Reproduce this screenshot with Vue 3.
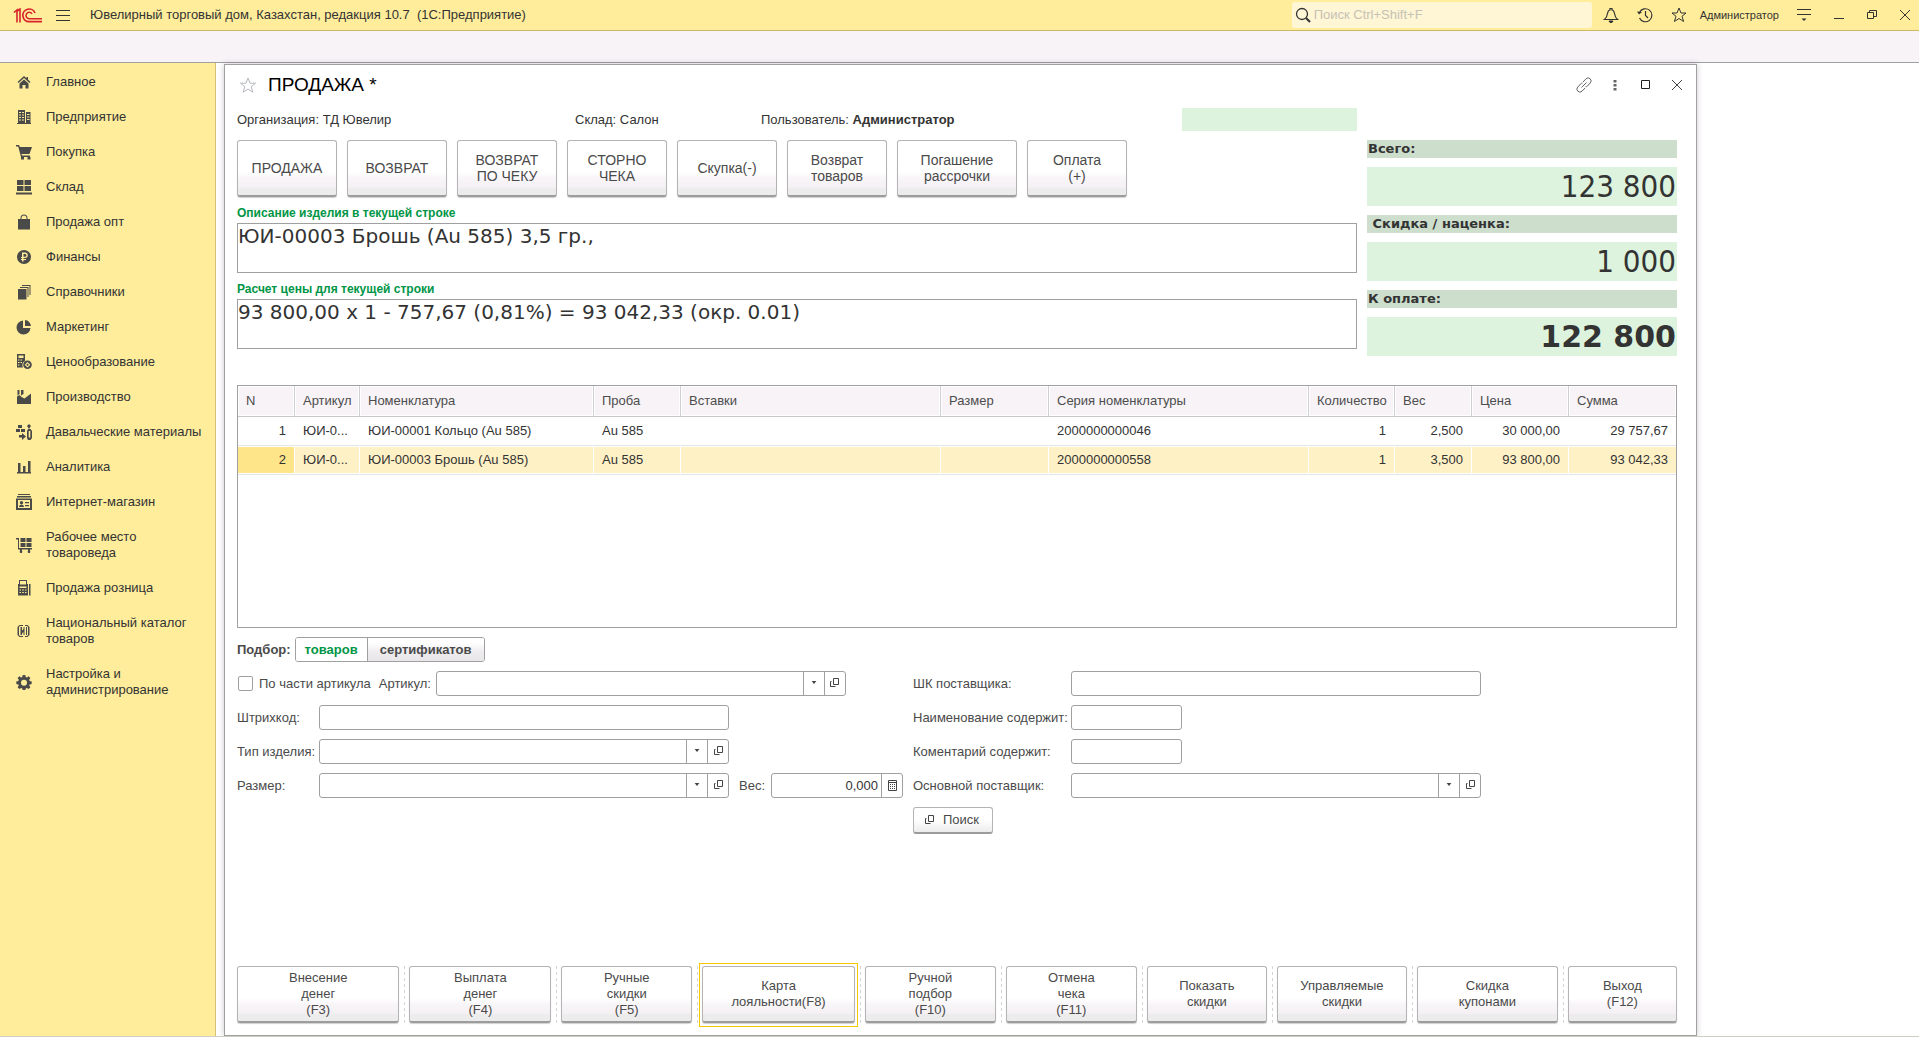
<script setup>
import { ref } from 'vue'

const sections = [
  { label: 'Главное', d: 'M8 2l2.500 2.200V3H12v2.500L14.500 8l-1 1L8 4 2.500 9l-1-1zM8 5.500l4.500 4V14.500H9.500V11h-3v3.500h-3v-5z' },
  { label: 'Предприятие', d: 'M1 14h14v1H1zM2 1h7v13H2zM3 3v1h2V3zm3 0v1h2V3zM3 5.500v1h2v-1zm3 0v1h2v-1zM3 8v1h2V8zm3 0v1h2V8zM3 10.500v1h2v-1zm3 0v1h2v-1zM10 3h4.500v11H10zm1 2v1h2.500V5zm0 2.500v1h2.500v-1zM11 10v1h2.500v-1z' },
  { label: 'Покупка', d: 'M0 1h3l1 2h12l-2.500 7H5.500L6 11.500h8V13H5L2.200 2.500H0zM5 13h3v2.500H5zm6.500 0h3v2.500h-3z' },
  { label: 'Склад', d: 'M1 1h6.500v5H1zm7.500 0H15v5H8.500zM1 7h6.500v5H1zm7.500 0H15v5H8.500zM0 13.500h16v2H0z' },
  { label: 'Продажа опт', d: 'M2 5h2.500V4a3.500 3.500 0 0 1 7 0v1H14v10.500H2zM5.500 5h5V4a2.500 2.500 0 0 0-5 0z' },
  { label: 'Финансы', d: 'M8 1a7 7 0 1 1 0 14A7 7 0 0 1 8 1zM6 3.500V8H5v1h1v1H5v1h1v1.500h1.500V11H10v-1H7.500V9H9a2.700 2.700 0 0 0 0-5.500zM7.500 5H9a1.400 1.400 0 0 1 0 2.800H7.500z' },
  { label: 'Справочники', d: 'M2 5h8.500v10.500H2zM4 3h8.500v10h-1V4H4zM6 1h8.500v10h-1V2H6z' },
  { label: 'Маркетинг', d: 'M7 1.500V9h7.500A7 7 0 1 1 7 1.500zM9 1a6.500 6.500 0 0 1 6 6H9z' },
  { label: 'Ценообразование', d: 'M1 0h8v7a4.500 4.500 0 0 0-2 6.500H1zM2.500 1.500v2.500h5V1.500zM2 5.500v1h1.500v-1zm2.500 0v1H6v-1zM2 8v1h1.500V8zm2.500 0v1H6V8zM2 10.500v1h1.500v-1zM11.500 6.500a4.300 4.300 0 1 1 0 8.600 4.300 4.300 0 0 1 0-8.600zM11.500 8l-2.800 2.800 2.800 2.800 2.800-2.800zm0 1.500 1.300 1.300-1.300 1.300-1.300-1.300z' },
  { label: 'Производство', d: 'M1 15V7.500l2.500-1.500 2 2 3 1.500L15 4.500V15zM1.500 1h2v4l-2 1.500zM5 1h2.500v4L5 6.500z' },
  { label: 'Давальческие материалы', d: 'M2 1h4v3H2zM0 5h4v3H0zm5 0h4v3H5zM3 11h3V9l4 3.500L6 16v-2.500H3zM13 0l2 2-2 3-2-3zM12 5h2.500l1.500 2v7l-1.500 2H12l-1-2V7zm.7 2v6.500h1.600V7z' },
  { label: 'Аналитика', d: 'M1 13h14v1.500H1zM2 4h2.500v9H2zm5 3h2.500v6H7zm5-5h2.500v11H12z' },
  { label: 'Интернет-магазин', d: 'M2 0h12v1H2zM1 2h14v1.500H1zM0 4.500h16V16H0zM2 6v8h12V6zM5.500 7a1.700 1.700 0 1 1 0 3.400 1.700 1.700 0 0 1 0-3.400zM3 13c0-3 5-3 5 0zM9 8h4v1.200H9zm0 3h4v1.200H9z' },
  { label: 'Рабочее место товароведа', d: 'M0 1h3v10h13v1.500H14V14a1.300 1.300 0 1 1-2 0v-1.500H6V14a1.300 1.300 0 1 1-2 0v-1.500H2V2.500H0zM4.500 1h5v4h-5zm6 0h5v4h-5zm-6 5h5v4h-5zm6 0h5v4h-5z' },
  { label: 'Продажа розница', d: 'M3 0h8v4h1v11.500H2V4h1zM4 1v3.500h6V1zM3.500 6.500v1.500h7V6.500zm0 3v1H5v-1zm2.700 0v1h1.600v-1zm2.800 0v1h1.500v-1zM3.500 12v1H5v-1zm2.700 0v1h1.600v-1zM9 12v1h1.500v-1zM13 4h1.500v11.500H13z' },
  { label: 'Национальный каталог товаров', d: 'M3.500 2H7v1H4L3 4v8l1 1h3v1H3.500L1.500 12V4zM9 2h2.500l2 2v8l-2 2H9v-1h2l1-1V4l-1-1H9zM4.500 4H6v3.500L7.500 6V4h1v8h-1V9L6 10.500V12H4.500zM10 4h1v8h-1z' },
  { label: 'Настройка и администрирование', d: 'M6.700 1h2.600l.4 2 1.200.5 1.700-1.200 1.800 1.800-1.200 1.700.5 1.200 2 .4v2.600l-2 .4-.5 1.200 1.200 1.700-1.800 1.800-1.700-1.200-1.200.5-.4 2H6.700l-.4-2-1.200-.5-1.700 1.200-1.800-1.800 1.200-1.700-.5-1.200-2-.4V7.400l2-.4.500-1.200-1.200-1.700 1.800-1.800 1.700 1.200L6.300 3zM8 5.700a3 3 0 1 0 0 6 3 3 0 0 0 0-6z' },
]

const actions = [
  { text: 'ПРОДАЖА' }, { text: 'ВОЗВРАТ' }, { text: 'ВОЗВРАТ\nПО ЧЕКУ' }, { text: 'СТОРНО\nЧЕКА' },
  { text: 'Скупка(-)' }, { text: 'Возврат\nтоваров' }, { text: 'Погашение\nрассрочки', wide: true }, { text: 'Оплата\n(+)' },
]

const totals = [
  { id: 'total', label: 'Всего:', value: '123 800' },
  { id: 'discount', label: '\u00a0Скидка / наценка:', value: '1 000' },
  { id: 'due', label: 'К оплате:', value: '122 800', strong: true },
]

const columns = [
  { title: 'N', width: 57, right: true }, { title: 'Артикул', width: 65 }, { title: 'Номенклатура', width: 234 },
  { title: 'Проба', width: 87 }, { title: 'Вставки', width: 260 }, { title: 'Размер', width: 108 },
  { title: 'Серия номенклатуры', width: 260 }, { title: 'Количество', width: 86, right: true },
  { title: 'Вес', width: 77, right: true }, { title: 'Цена', width: 97, right: true }, { title: 'Сумма', width: 107, right: true },
]
const totalWidth = columns.reduce((sum, c) => sum + c.width, 0)

const rows = [
  ['1', 'ЮИ-0...', 'ЮИ-00001 Кольцо (Au 585)', 'Au 585', '', '', '2000000000046', '1', '2,500', '30 000,00', '29 757,67'],
  ['2', 'ЮИ-0...', 'ЮИ-00003 Брошь (Au 585)', 'Au 585', '', '', '2000000000558', '1', '3,500', '93 800,00', '93 042,33'],
]
const selected = ref(1)
const mode = ref('goods')

const commands = [
  { text: 'Внесение\nденег\n(F3)', size: 163 }, { text: 'Выплата\nденег\n(F4)', size: 142 },
  { text: 'Ручные\nскидки\n(F5)', size: 131 }, { text: 'Карта\nлояльности(F8)', size: 153, focused: true },
  { text: 'Ручной\nподбор\n(F10)', size: 131 }, { text: 'Отмена\nчека\n(F11)', size: 131 },
  { text: 'Показать\nскидки', size: 120 }, { text: 'Управляемые\nскидки', size: 130 },
  { text: 'Скидка\nкупонами', size: 141 }, { text: 'Выход\n(F12)', size: 109 },
]
</script>

<template>
  <div class="app">
    <header class="titlebar">
      <svg class="logo" viewBox="0 0 30 15" fill="none" stroke="#d8232a" stroke-width="2">
        <path d="M1 4.500 4 2v12.500M7 14.500V1L3.500 3.500" stroke-width="1.600" />
        <path d="M22 5a6.300 6.300 0 1 0-6 8.700h13" stroke-width="1.700" />
        <path d="M19 6a3.200 3.200 0 1 0-3 4.700h13" stroke-width="1.500" />
      </svg>
      <button class="icon menu" aria-label="Меню">
        <svg width="14" height="13" viewBox="0 0 14 13" stroke="#333"><path d="M0 1.500h14M0 6.500h14M0 11.500h14" /></svg>
      </button>
      <span class="app-name">Ювелирный торговый дом, Казахстан, редакция 10.7 &nbsp;(1С:Предприятие)</span>
      <label class="search">
        <svg width="16" height="16" viewBox="0 0 16 16" fill="none" stroke="#333"><circle cx="7" cy="7" r="5.500" stroke-width="1.300" /><path d="m11 11 4 4" stroke-width="2.200" /></svg>
        <input type="search" placeholder="Поиск Ctrl+Shift+F" aria-label="Поиск" />
      </label>
      <div class="tools">
        <button class="icon" aria-label="Оповещения">
          <svg width="16" height="16" viewBox="0 0 16 16" fill="none" stroke="#333"><path d="M1.500 12.500c2-1.500 2.500-3 3-6C5 4 6 3 7 3V1.500h2V3c1 0 2 1 2.500 3.500.5 3 1 4.500 3 6z" stroke-width="1.200" /><path d="M6 14h4l-1 1.500H7z" fill="#333" /></svg>
        </button>
        <button class="icon" aria-label="История">
          <svg width="16" height="16" viewBox="0 0 16 16" fill="none" stroke="#333"><path d="M2.500 5.500A6.500 6.500 0 1 1 2.500 11M8.500 4v4.500l2.500 2.500" stroke-width="1.200" /><path d="M0 4.500 2 7.500l3-2.500z" fill="#333" stroke="none" /></svg>
        </button>
        <button class="icon" aria-label="Избранное">
          <svg width="16" height="16" viewBox="0 0 16 16" fill="none" stroke="#333"><path d="m8 1 2 5h5l-4 3.300 1.600 5.200L8 11.500l-4.600 3L5 9.300 1 6h5z" /></svg>
        </button>
      </div>
      <span class="user">Администратор</span>
      <div class="window-tools">
        <button class="icon" aria-label="Настройка панелей">
          <svg width="14" height="14" viewBox="0 0 14 14" stroke="#333"><path d="M0 1.500h14M0 6.500h14" /><path d="M4.500 10.500h5L7 13z" fill="#333" stroke="none" /></svg>
        </button>
        <button class="icon" aria-label="Свернуть">
          <svg width="10" height="10" viewBox="0 0 10 10" stroke="#333"><path d="M0 8.500h10" /></svg>
        </button>
        <button class="icon" aria-label="Восстановить">
          <svg width="10" height="10" viewBox="0 0 10 10" fill="none" stroke="#333"><path d="M.5 2.500h6v6h-6zM2.500 2.500v-2h7v6h-3" /></svg>
        </button>
        <button class="icon" aria-label="Закрыть программу">
          <svg width="10" height="10" viewBox="0 0 10 10" stroke="#333"><path d="m0 0 10 10M10 0 0 10" /></svg>
        </button>
      </div>
    </header>
    <div class="panel-strip"></div>

    <div class="body">
      <nav class="sidebar">
        <a v-for="s in sections" :key="s.label" href="#" class="section">
          <svg width="16" height="16" viewBox="0 0 16 16" fill="#4a4a48" fill-rule="evenodd"><path :d="s.d" /></svg>
          <span>{{ s.label }}</span>
        </a>
      </nav>

      <main class="desk">
        <section class="window">
          <div class="window-head">
            <svg width="18" height="18" viewBox="0 0 18 18" fill="none" stroke="#b4b8c0"><path d="m9 2 2 5.200h5.500l-4.300 3.400 1.600 5.600L9 13l-4.800 3.200 1.600-5.600L1.500 7.200H7z" /></svg>
            <h1>ПРОДАЖА *</h1>
            <div class="head-tools">
              <button class="icon" aria-label="Ссылка">
                <svg width="16" height="16" viewBox="0 0 16 16" fill="none" stroke="#666"><path d="M5.500 10.500l5-5M7 5l3-3.200a2.800 2.800 0 0 1 4.200 4.200L11.500 9a2.500 2.500 0 0 1-2 .8M9 11l-3 3.200A2.800 2.800 0 0 1 1.800 10L4.500 7a2.500 2.500 0 0 1 2-.8" /></svg>
              </button>
              <button class="icon" aria-label="Ещё">
                <svg width="4" height="12" viewBox="0 0 4 12" fill="#666"><path d="M.5 1h3v2.500h-3zM.5 5h3v2.500h-3zM.5 9h3v2.500h-3z" /></svg>
              </button>
              <button class="icon" aria-label="Развернуть">
                <svg width="10" height="10" viewBox="0 0 10 10" fill="none" stroke="#222"><path d="M.5.5h8v8h-8z" /></svg>
              </button>
              <button class="icon" aria-label="Закрыть">
                <svg width="10" height="10" viewBox="0 0 10 10" stroke="#444"><path d="m0 0 10 10M10 0 0 10" /></svg>
              </button>
            </div>
          </div>

          <div class="top">
            <div class="top-main">
              <div class="info">
                <span>Организация: ТД Ювелир</span>
                <span>Склад: Салон</span>
                <span>Пользователь: <b>Администратор</b></span>
                <span class="status"></span>
              </div>
              <div class="actions">
                <button v-for="a in actions" :key="a.text" class="big" :class="{ wide: a.wide }">{{ a.text }}</button>
              </div>
              <label class="green" for="descr">Описание изделия в текущей строке</label>
              <textarea id="descr" class="display" readonly value="ЮИ-00003 Брошь (Au 585) 3,5 гр.,"></textarea>
              <label class="green" for="calc">Расчет цены для текущей строки</label>
              <textarea id="calc" class="display" readonly value="93 800,00 x 1 - 757,67 (0,81%) = 93 042,33 (окр. 0.01)"></textarea>
            </div>
            <div class="totals">
              <template v-for="t in totals" :key="t.id">
                <label :for="t.id">{{ t.label }}</label>
                <output :id="t.id" :class="{ strong: t.strong }">{{ t.value }}</output>
              </template>
            </div>
          </div>

          <div class="grid">
            <table>
              <colgroup>
                <col v-for="c in columns" :key="c.title" :style="{ width: (c.width / totalWidth) * 100 + '%' }" />
              </colgroup>
              <thead>
                <tr><th v-for="c in columns" :key="c.title">{{ c.title }}</th></tr>
              </thead>
              <tbody>
                <tr v-for="(r, i) in rows" :key="i" :class="{ selected: selected === i }" @click="selected = i">
                  <td v-for="(cell, j) in r" :key="j" :class="{ right: columns[j].right }">{{ cell }}</td>
                </tr>
              </tbody>
            </table>
          </div>

          <div class="pick">
            <b>Подбор:</b>
            <div class="segmented">
              <button :class="{ active: mode === 'goods' }" @click="mode = 'goods'">товаров</button>
              <button :class="{ active: mode === 'certs' }" @click="mode = 'certs'">сертификатов</button>
            </div>
          </div>

          <div class="form">
            <div class="form-left">
              <div class="row">
                <label class="check"><input type="checkbox" />По части артикула</label>
                <label class="inline" for="article">Артикул:</label>
                <div class="field">
                  <select id="article"></select>
                  <svg class="arrow" viewBox="0 0 21 23"><path d="M8 9h5l-2.500 3z" fill="#444" /></svg>
                  <button aria-label="Открыть"><svg width="11" height="11" viewBox="0 0 11 11" fill="none" stroke="#444"><path d="M4.500.5h5v6h-5zM2.500 3.500h-1v5h5" /></svg></button>
                </div>
              </div>
              <div class="row">
                <label class="caption" for="barcode">Штрихкод:</label>
                <div class="field"><input id="barcode" type="text" /></div>
              </div>
              <div class="row">
                <label class="caption" for="kind">Тип изделия:</label>
                <div class="field">
                  <select id="kind"></select>
                  <svg class="arrow" viewBox="0 0 21 23"><path d="M8 9h5l-2.500 3z" fill="#444" /></svg>
                  <button aria-label="Открыть"><svg width="11" height="11" viewBox="0 0 11 11" fill="none" stroke="#444"><path d="M4.500.5h5v6h-5zM2.500 3.500h-1v5h5" /></svg></button>
                </div>
              </div>
              <div class="row">
                <label class="caption" for="size">Размер:</label>
                <div class="field">
                  <select id="size"></select>
                  <svg class="arrow" viewBox="0 0 21 23"><path d="M8 9h5l-2.500 3z" fill="#444" /></svg>
                  <button aria-label="Открыть"><svg width="11" height="11" viewBox="0 0 11 11" fill="none" stroke="#444"><path d="M4.500.5h5v6h-5zM2.500 3.500h-1v5h5" /></svg></button>
                </div>
                <label class="weight-caption" for="weight">Вес:</label>
                <div class="field weight">
                  <input id="weight" type="text" value="0,000" />
                  <button aria-label="Калькулятор"><svg width="11" height="11" viewBox="0 0 11 11" fill="none" stroke="#444"><path d="M1.500.5h8v10h-8zM1.500 2.500h8" /><path d="M3 4.500h5M3 6.500h5M3 8.500h5" stroke-dasharray="1 1" /></svg></button>
                </div>
              </div>
            </div>
            <div class="form-right">
              <div class="row">
                <label class="caption" for="supplier-code">ШК поставщика:</label>
                <div class="field"><input id="supplier-code" type="text" /></div>
              </div>
              <div class="row">
                <label class="caption" for="name-part">Наименование содержит:</label>
                <div class="field short"><input id="name-part" type="text" /></div>
              </div>
              <div class="row">
                <label class="caption" for="comment-part">Коментарий содержит:</label>
                <div class="field short"><input id="comment-part" type="text" /></div>
              </div>
              <div class="row">
                <label class="caption" for="supplier">Основной поставщик:</label>
                <div class="field">
                  <select id="supplier"></select>
                  <svg class="arrow" viewBox="0 0 21 23"><path d="M8 9h5l-2.500 3z" fill="#444" /></svg>
                  <button aria-label="Открыть"><svg width="11" height="11" viewBox="0 0 11 11" fill="none" stroke="#444"><path d="M4.500.5h5v6h-5zM2.500 3.500h-1v5h5" /></svg></button>
                </div>
              </div>
              <button class="find">
                <svg width="11" height="11" viewBox="0 0 11 11" fill="none" stroke="#444"><path d="M4.500.5h5v6h-5zM2.500 3.500h-1v5h5" /></svg>
                Поиск
              </button>
            </div>
          </div>

          <div class="commands">
            <template v-for="(c, i) in commands" :key="c.text">
              <i v-if="i > 0" class="sep"></i>
              <button class="big" :class="{ focused: c.focused }" :style="{ flexGrow: c.size }">{{ c.text }}</button>
            </template>
          </div>
        </section>
      </main>
    </div>
    <div class="bottom-edge"></div>
  </div>
</template>

<style>
body { margin: 0; background: #fff; }
</style>

<style scoped>
* { box-sizing: border-box; }
.app { display: flex; flex-direction: column; min-height: 100vh; font: 13px/16px "Liberation Sans", Arial, sans-serif; color: #333; }
button, input, select, textarea { font: inherit; color: inherit; margin: 0; padding: 0; border: 0; border-radius: 0; background: none; outline: 0; }
svg { display: block; flex: none; }
.icon { display: flex; align-items: center; justify-content: center; }

.titlebar { display: flex; align-items: center; height: 31px; padding: 0 9px 0 13px; background: #ffed9b; border-bottom: 1px solid #cdb866; }
.logo { width: 30px; height: 15px; }
.menu { margin: 0 20px 0 13px; }
.search { display: flex; align-items: center; gap: 3px; width: 300px; height: 26px; margin-left: auto; padding-left: 3px; background: #fff6d6; border-radius: 3px; }
.search input { flex: 1; min-width: 0; appearance: none; }
.search input::placeholder { color: #c6c2b4; opacity: 1; }
.tools { display: flex; gap: 18px; margin: 0 13px 0 11px; }
.user { font-size: 11px; }
.window-tools { display: flex; align-items: center; gap: 23px; margin-left: 18px; }
.panel-strip { height: 32px; background: #f7f3f7; border-bottom: 1px solid #a0a0a0; }

.body { display: flex; flex: 1; }
.sidebar { flex: none; width: 216px; padding-top: 1px; background: #ffed9b; border-right: 1px solid #d3c276; }
.section { display: flex; align-items: center; gap: 14px; min-height: 35px; padding: 10px 16px 9px; color: #333; text-decoration: none; }
.section span { flex: 0 0 160px; }
.desk { display: flex; flex: 1; padding: 1px 0 0 8px; min-width: 0; }

.window { display: flex; flex-direction: column; flex: 0 1 1473px; min-width: 0; padding: 0 19px 12px 12px; border: 1px solid #a0a0a0; background: #fff; box-shadow: 0 0 6px rgba(60, 30, 60, 0.25); }
.window-head { display: flex; align-items: center; height: 43px; padding: 0 0 3px 2px; }
h1 { margin: 0 0 0 11px; font-size: 19px; line-height: 24px; font-weight: 400; color: #000; }
.head-tools { display: flex; align-items: center; margin-left: auto; margin-right: -15px; }
.head-tools .icon { width: 31px; height: 24px; }

.top { display: flex; gap: 10px; }
.top-main { display: flex; flex-direction: column; flex: 1; min-width: 0; }
.info { display: grid; grid-template-columns: 338fr 186fr 421fr 175fr; align-items: center; height: 23px; }
.status { height: 23px; background: #ddf3de; }
.actions { display: flex; gap: 10px; margin-top: 9px; }
.big { position: relative; height: 57px; border: 1px solid #b4b4b4; border-bottom: 2px solid #9c9c9c; border-radius: 3px; background: linear-gradient(#fff 58%, #f9f6f9 68%, #f4f0f4 86%, #ececec 88%); box-shadow: 0 1px 1px #d0d0d0; white-space: pre-line; color: #4a4a4a; text-align: center; }
.actions .big { width: 100px; font-size: 14px; }
.actions .wide { width: 120px; }
.green { margin: 8px 0 2px; font-size: 12px; font-weight: 700; color: #009646; }
.display { display: block; width: 100%; height: 50px; border: 1px solid #a0a0a0; resize: none; font: 20px/24px "DejaVu Sans", Verdana, sans-serif; color: #333; }

.totals { display: flex; flex-direction: column; flex: none; gap: 9px; width: 310px; padding-top: 32px; }
.totals label { height: 18px; padding-left: 1px; background: #cddecd; font: bold 13px/18px "DejaVu Sans", Verdana, sans-serif; }
.totals output { height: 39px; padding-right: 1px; background: #ddf3de; font: 31px/39px "DejaVu Sans Condensed", Tahoma, sans-serif; text-align: right; }
.totals .strong { font: bold 30px/39px "DejaVu Sans", Verdana, sans-serif; }

.grid { min-height: 243px; margin-top: 29px; border: 1px solid #a0a0a0; }
table { width: 100%; table-layout: fixed; border-collapse: separate; border-spacing: 0; }
th, td { padding: 0 8px; overflow: hidden; text-align: left; font-weight: 400; white-space: nowrap; }
th { height: 31px; background: #f7f3f7; color: #4d4d4d; border-right: 1px solid #d0d0d0; border-bottom: 1px solid #c8c8c8; box-shadow: inset 0 0 0 1px #fff; }
td { height: 29px; border-right: 1px solid #fff; border-bottom: 1px solid #e4e4e4; box-shadow: inset 0 1px #fff, inset 0 -1px #fff; }
th:last-child, td:last-child { border-right: 0; }
.right { text-align: right; }
.selected td { background: #fff1c6; }
.selected td:first-child { background: #ffe58a; }

.pick { display: flex; align-items: center; gap: 4px; margin-top: 9px; color: #4a4a4a; }
.segmented { display: flex; height: 25px; border: 1px solid #a0a0a0; border-radius: 3px; overflow: hidden; }
.segmented button { padding: 0 9px; font-weight: 700; background: linear-gradient(#fff 20%, #efecef 60%, #e8e6e8); }
.segmented button + button { border-left: 1px solid #a0a0a0; padding: 0 12px; }
.segmented .active { background: #fff; color: #009646; }

.form { display: flex; margin-top: 9px; color: #4a4a4a; }
.form-left { flex: 0 1 676px; }
.form-left, .form-right { display: flex; flex-direction: column; gap: 9px; }
.row { display: flex; align-items: center; height: 25px; }
.caption { flex: none; width: 82px; white-space: nowrap; }
.form-right .caption { width: 158px; }
.check { display: flex; align-items: center; gap: 6px; padding-left: 1px; }
.check input { appearance: none; width: 15px; height: 15px; border: 1px solid #a0a0a0; border-radius: 2px; }
.inline { margin: 0 5px 0 8px; }
.field { display: flex; width: 410px; height: 25px; border: 1px solid #a0a0a0; border-radius: 3px; background: #fff; }
.field input, .field select { flex: 1; min-width: 0; padding: 0 3px; appearance: none; color: #333; }
.field .arrow { width: 21px; height: 23px; border-left: 1px solid #a0a0a0; }
.field button { display: flex; align-items: center; justify-content: center; width: 21px; border-left: 1px solid #a0a0a0; }
.short { width: 111px; }
.weight-caption { margin: 0 6px 0 10px; }
.weight { width: 132px; }
.weight input { text-align: right; }
.find { display: flex; align-items: center; align-self: flex-start; gap: 8px; height: 27px; padding: 0 13px 0 10px; border: 1px solid #b4b4b4; border-bottom: 2px solid #9c9c9c; border-radius: 3px; background: linear-gradient(#fff 50%, #ececec); }

.commands { display: flex; margin-top: auto; padding-top: 24px; }
.commands .big { flex: 1 1 0; min-width: 0; }
.sep { flex: none; width: 10px; background: repeating-linear-gradient(#d4d4d4 0 3px, transparent 3px 6px) 5px 0 / 1px 100% no-repeat; }
.focused::after { content: ""; position: absolute; inset: -4px -4px -6px; border: 1px solid #f5c800; }
.bottom-edge { height: 1px; background: #cfccc2; }
</style>
